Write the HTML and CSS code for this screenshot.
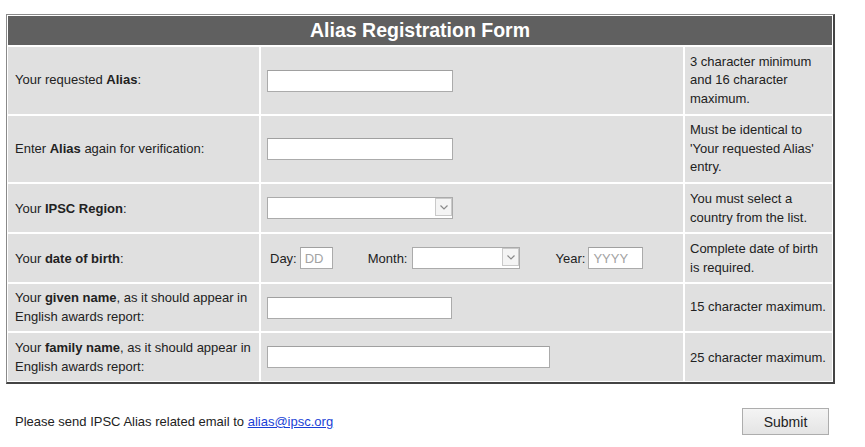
FILE: index.html
```html
<!DOCTYPE html>
<html lang="en">
<head>
<meta charset="utf-8">
<title>Alias Registration Form</title>
<link rel="stylesheet" href="styles.css">
</head>
<body>
<form class="page">
  <table class="reg">
    <colgroup>
      <col class="c1"><col class="c2"><col class="c3">
    </colgroup>
    <thead>
      <tr><th colspan="3" class="title">Alias Registration Form</th></tr>
    </thead>
    <tbody>
      <tr class="tall">
        <td class="lbl">Your requested <b>Alias</b>:</td>
        <td class="fld"><input type="text" class="txt w186"></td>
        <td class="note">3 character minimum and 16 character maximum.</td>
      </tr>
      <tr class="tall2">
        <td class="lbl">Enter <b>Alias</b> again for verification:</td>
        <td class="fld"><input type="text" class="txt w186"></td>
        <td class="note">Must be identical to 'Your requested Alias' entry.</td>
      </tr>
      <tr>
        <td class="lbl">Your <b>IPSC Region</b>:</td>
        <td class="fld">
          <span class="sel w186"><select><option></option></select><span class="arrow"><svg width="8" height="5" viewBox="0 0 8 5"><path d="M0.5 0.5 L4 4 L7.5 0.5" fill="none" stroke="#8a8a8a" stroke-width="1.2"/></svg></span></span>
        </td>
        <td class="note">You must select a country from the list.</td>
      </tr>
      <tr>
        <td class="lbl">Your <b>date of birth</b>:</td>
        <td class="fld">
          <div class="dob">
            <span class="dl day">Day:</span>
            <input type="text" class="txt w33" placeholder="DD">
            <span class="dl month">Month:</span>
            <span class="sel w108"><select><option></option></select><span class="arrow"><svg width="8" height="5" viewBox="0 0 8 5"><path d="M0.5 0.5 L4 4 L7.5 0.5" fill="none" stroke="#8a8a8a" stroke-width="1.2"/></svg></span></span>
            <span class="dl year">Year:</span>
            <input type="text" class="txt w55" placeholder="YYYY">
          </div>
        </td>
        <td class="note">Complete date of birth is required.</td>
      </tr>
      <tr class="short">
        <td class="lbl">Your <b>given name</b>, as it should appear in English awards report:</td>
        <td class="fld"><input type="text" class="txt w185"></td>
        <td class="note">15 character maximum.</td>
      </tr>
      <tr>
        <td class="lbl">Your <b>family name</b>, as it should appear in English awards report:</td>
        <td class="fld"><input type="text" class="txt w283"></td>
        <td class="note">25 character maximum.</td>
      </tr>
    </tbody>
  </table>
  <div class="footer">
    <span class="contact">Please send IPSC Alias related email to <a href="#">alias@ipsc.org</a></span>
    <button type="button" class="submit">Submit</button>
  </div>
</form>
</body>
</html>
```
FILE: styles.css
```css
html, body {
  margin: 0;
  padding: 0;
  background: #ffffff;
}
body {
  font-family: "Liberation Sans", Arial, sans-serif;
  font-size: 13px;
  color: #222222;
}
.page {
  padding: 14px 0 0 6px;
  width: 829px;
}
.reg {
  width: 829px;
  table-layout: fixed;
  border-collapse: separate;
  border-spacing: 0;
  background: #ffffff;
  border-style: solid;
  border-width: 1px 2px 2px 1px;
  border-color: #8a8a8a #444444 #444444 #8a8a8a;
}
.c1 { width: 253px; }
.c2 { width: 424px; }
.c3 { width: 149px; }
.reg th, .reg td {
  border: 1px solid #ffffff;
  background: #e0e0e0;
  padding: 5px 5px;
  line-height: 19px;
  vertical-align: middle;
  text-align: left;
  font-weight: normal;
}
.reg th.title {
  background: #606060;
  color: #ffffff;
  font-weight: bold;
  font-size: 19.5px;
  line-height: 23px;
  padding: 3px 5px;
  text-align: center;
}
.reg td.lbl {
  padding-left: 7px;
}
.reg td.fld {
  padding-left: 6px;
}
.reg tr.tall td {
  height: 57px;
  line-height: 18.5px;
}
.reg tr.tall2 td {
  height: 56px;
  line-height: 18.5px;
}
.reg tr.short td {
  height: 37px;
  line-height: 18.5px;
}
.reg td.note {
  padding-left: 5px;
  padding-right: 4px;
}
.txt {
  box-sizing: border-box;
  height: 22px;
  border: 1px solid #ababab;
  border-top-color: #a0a0a0;
  background: #ffffff;
  padding: 1px 4px;
  font-family: "Liberation Sans", Arial, sans-serif;
  font-size: 13px;
  color: #222;
  margin: 0;
  vertical-align: middle;
  outline: none;
}
.txt::placeholder {
  color: #a3a3a3;
}
.w186 { width: 186px; }
.w185 { width: 185px; }
.w283 { width: 283px; }
.w33 { width: 33px; }
.w55 { width: 55px; }
.w108 { width: 108px; }
.sel {
  position: relative;
  display: inline-block;
  height: 22px;
  vertical-align: middle;
}
.sel select {
  -webkit-appearance: none;
  appearance: none;
  box-sizing: border-box;
  width: 100%;
  height: 22px;
  margin: 0;
  border: 1px solid #ababab;
  background: #ffffff;
  font-family: "Liberation Sans", Arial, sans-serif;
  font-size: 13px;
  outline: none;
  display: block;
}
.sel .arrow {
  position: absolute;
  top: 1px;
  right: 1px;
  width: 17px;
  height: 18px;
  box-sizing: border-box;
  border: 1px solid #c9c9c9;
  background: #f4f4f4;
  display: flex;
  align-items: center;
  justify-content: center;
  pointer-events: none;
}
.dob {
  display: flex;
  align-items: center;
}
.dl {
  color: #222;
}
.day { margin-left: 3px; margin-right: 3px; }
.month { margin-left: 35px; margin-right: 5px; }
.year { margin-left: 35px; margin-right: 3px; }
.footer {
  display: flex;
  justify-content: space-between;
  align-items: center;
  margin-top: 24px;
  padding: 0 6px 0 9px;
}
.contact a {
  color: #1a3fd6;
  text-decoration: underline;
}
.submit {
  width: 87px;
  height: 27px;
  border: 1px solid #adadad;
  background: linear-gradient(#f4f4f4, #e4e4e4);
  font-family: "Liberation Sans", Arial, sans-serif;
  font-size: 14px;
  color: #222;
  padding: 0;
  border-radius: 0;
}
```
